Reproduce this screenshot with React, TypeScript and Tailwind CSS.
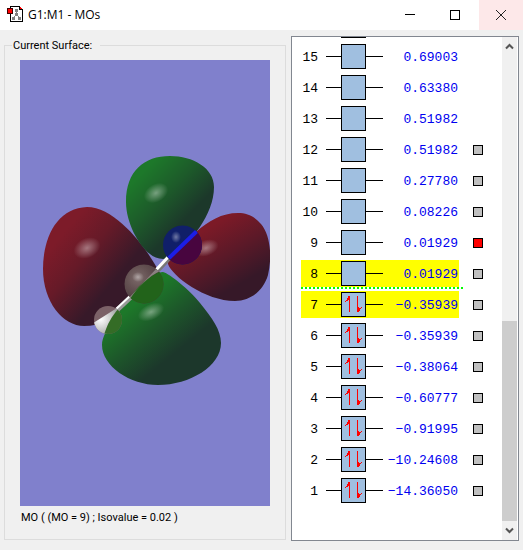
import React from 'react';

type Orbital = {
    index: number;
    energy: string;
    occupied?: boolean;
    marked?: boolean;
    surface?: 'none' | 'ready' | 'shown';
};

const orbitals: Orbital[] = [
    { index: 15, energy: '0.69003', surface: 'none' },
    { index: 14, energy: '0.63380', surface: 'none' },
    { index: 13, energy: '0.51982', surface: 'none' },
    { index: 12, energy: '0.51982' },
    { index: 11, energy: '0.27780' },
    { index: 10, energy: '0.08226' },
    { index: 9, energy: '0.01929', surface: 'shown' },
    { index: 8, energy: '0.01929', marked: true },
    { index: 7, energy: '−0.35939', occupied: true, marked: true },
    { index: 6, energy: '−0.35939', occupied: true },
    { index: 5, energy: '−0.38064', occupied: true },
    { index: 4, energy: '−0.60777', occupied: true },
    { index: 3, energy: '−0.91995', occupied: true },
    { index: 2, energy: '−10.24608', occupied: true },
    { index: 1, energy: '−14.36050', occupied: true },
];

const AppIcon = () => (
    <svg width="17" height="18" viewBox="0 0 17 18" shapeRendering="crispEdges" aria-hidden="true">
        <path d="M3.5 .5h9l3 3v12h-12z" fill="#fff" stroke="#000" />
        <path d="M12 0h1v1h1v1h1v1h1v1h-4z" fill="#000" />
        <path d="M13 1h1v1h1v1h-2z" fill="#f00" />
        <path d="M8 3h3v3H8zM8 7h3v3H8zM5 11h3v3H5zM11 11h3v3h-3z" fill="#808080" />
        <path d="M9 6h1v1H9zM7 10h1v1H7zM11 10h1v1h-1z" fill="#808080" />
        <path d="M.5 2.5h5v5h-5z" fill="#f00" stroke="#400000" />
    </svg>
);

const TitleBar = () => (
    <header className="flex h-[30px] shrink-0 items-center bg-white pl-[7px]">
        <AppIcon />
        <h1 className="ml-1 flex-1 font-['Open_Sans',sans-serif] text-[12px] leading-4 text-black">G1:M1 - MOs</h1>
        <button type="button" aria-label="Minimize" className="flex h-full w-[45px] items-center justify-center">
            <svg width="10" height="10" shapeRendering="crispEdges">
                <path d="M0 4.5h10" stroke="#000" />
            </svg>
        </button>
        <button type="button" aria-label="Maximize" className="flex h-full w-[45px] items-center justify-center">
            <svg width="10" height="10" shapeRendering="crispEdges">
                <path d="M.5.5h9v9h-9z" fill="none" stroke="#000" />
            </svg>
        </button>
        <button type="button" aria-label="Close" className="ml-[2px] flex h-full w-[44px] items-center justify-center bg-[#fde8e9]">
            <svg width="10" height="10">
                <path d="M0 0l10 10M10 0L0 10" stroke="#222" />
            </svg>
        </button>
    </header>
);

const SurfaceView = () => (
    <svg
        viewBox="20 60 250 446"
        preserveAspectRatio="xMidYMid slice"
        role="img"
        aria-label="Molecular orbital 9"
        className="block min-h-0 w-full flex-1 bg-[#8080cc]"
    >
        <defs>
            <linearGradient id="redLeft" gradientUnits="userSpaceOnUse" x1="62" y1="235" x2="115" y2="280">
                <stop offset="0" stopColor="#7d1b29" />
                <stop offset="0.45" stopColor="#661a28" />
                <stop offset="1" stopColor="#371929" />
            </linearGradient>
            <linearGradient id="redRight" gradientUnits="userSpaceOnUse" x1="208" y1="228" x2="240" y2="284">
                <stop offset="0" stopColor="#7c1a27" />
                <stop offset="0.5" stopColor="#5b1928" />
                <stop offset="1" stopColor="#361828" />
            </linearGradient>
            <linearGradient id="greenTop" gradientUnits="userSpaceOnUse" x1="145" y1="170" x2="190" y2="214">
                <stop offset="0" stopColor="#1d782a" />
                <stop offset="0.5" stopColor="#1d5b2a" />
                <stop offset="1" stopColor="#1c382a" />
            </linearGradient>
            <linearGradient id="greenBottom" gradientUnits="userSpaceOnUse" x1="134" y1="305" x2="174" y2="354">
                <stop offset="0" stopColor="#1d7829" />
                <stop offset="0.5" stopColor="#1d562a" />
                <stop offset="1" stopColor="#1c372b" />
            </linearGradient>
            <radialGradient id="shine">
                <stop offset="0" stopColor="#fff" stopOpacity="0.4" />
                <stop offset="0.4" stopColor="#fff" stopOpacity="0.24" />
                <stop offset="1" stopColor="#fff" stopOpacity="0" />
            </radialGradient>
            <radialGradient id="carbon" cx="0.35" cy="0.35" r="0.7">
                <stop offset="0" stopColor="#7d6b6b" />
                <stop offset="0.4" stopColor="#655253" />
                <stop offset="1" stopColor="#463538" />
            </radialGradient>
            <radialGradient id="hydrogen" cx="0.3" cy="0.4" r="0.7">
                <stop offset="0" stopColor="#fff" />
                <stop offset="1" stopColor="#999" />
            </radialGradient>
            <clipPath id="carbonBall">
                <circle cx="144" cy="284" r="19.5" />
            </clipPath>
            <clipPath id="nitrogenBall">
                <circle cx="182.5" cy="245" r="19.5" />
            </clipPath>
            <clipPath id="hydrogenBall">
                <circle cx="108" cy="320" r="14" />
            </clipPath>
        </defs>

        <path d="M87 207C58 208 43 236 43 269C43 302 63 326 84 326C116 326 150 297 158 270C150 254 118 207 87 207Z" fill="url(#redLeft)" />
        <path d="M170 156C144 156 126 171 126 202C126 222 138 245 150 254C155 259 166 261 172 256C190 243 214 215 214 187C214 168 193 156 170 156Z" fill="url(#greenTop)" />
        <path d="M238 213C222 213 208 221 196 232C182 242 168 254 168 264C172 276 205 301 235 301C252 301 264 289 268 275C272 258 271 236 261 224C254 216 247 213 238 213Z" fill="url(#redRight)" />
        <path d="M163 272C170 274 190 290 200 303C212 318 221 330 221 343C221 366 190 385 158 385C130 385 102 366 102 345C102 330 125 303 140 289C150 279 157 272 163 272Z" fill="url(#greenBottom)" />

        <ellipse cx="87" cy="248" rx="14" ry="10" fill="url(#shine)" transform="rotate(-25 87 248)" />
        <ellipse cx="156" cy="193" rx="13" ry="9" fill="url(#shine)" transform="rotate(-30 156 193)" />
        <ellipse cx="206" cy="248" rx="13" ry="8" fill="url(#shine)" transform="rotate(-20 206 248)" />
        <ellipse cx="151" cy="312" rx="14" ry="8" fill="url(#shine)" transform="rotate(-25 151 312)" />

        {/* Bonds */}
        <path d="M116 311L132 296" stroke="#999" strokeWidth="5" />
        <path d="M115 310L131 295" stroke="#fff" strokeWidth="2" />
        <path d="M156 272L171 256" stroke="#777" strokeWidth="5" />
        <path d="M155 271L170 255" stroke="#fff" strokeWidth="3" />

        {/* Carbon */}
        <g clipPath="url(#carbonBall)">
            <circle cx="144" cy="284" r="20" fill="url(#carbon)" />
            <path d="M127 302C136 288 149 274 163 271L170 290L145 310Z" fill="#22631a" />
            <path d="M127 300L156 269L160 271C149 276 138 287 130 299Z" fill="#8b8180" />
            <ellipse cx="138" cy="277" rx="6" ry="5" fill="url(#shine)" />
        </g>

        {/* Nitrogen */}
        <g clipPath="url(#nitrogenBall)">
            <circle cx="182.5" cy="245" r="20" fill="#101f69" />
            <path d="M166 262L199 230L210 245L190 270Z" fill="#48053f" />
            <path d="M169 258L197 231" stroke="#1c1ee6" strokeWidth="4" />
            <ellipse cx="176" cy="237" rx="5" ry="6" fill="url(#shine)" />
        </g>

        {/* Hydrogen */}
        <g clipPath="url(#hydrogenBall)">
            <circle cx="108" cy="320" r="15" fill="#7b6167" />
            <path d="M93 323L117 308L121 310L108 336L92 334Z" fill="url(#hydrogen)" />
            <path d="M119 308L124 309L124 335L104 335C107 325 111 317 119 308Z" fill="#346c26" />
        </g>
    </svg>
);

const SurfacePanel = () => (
    <fieldset className="mt-[9px] mb-[10px] flex min-w-0 flex-1 flex-col border border-[#dcdcdc] px-[15px] pb-[13px] font-['Roboto',sans-serif] text-[11px]">
        <legend className="-ml-2 w-[88px] pl-px leading-[13px]">Current Surface:</legend>
        <div className="flex h-full flex-col pt-2">
            <SurfaceView />
            <p className="mt-1 pl-px leading-4">MO ( (MO = 9) ; Isovalue = 0.02 )</p>
        </div>
    </fieldset>
);

const Electrons = () => (
    <svg width="23" height="23" viewBox="0 0 23 23" shapeRendering="crispEdges" aria-hidden="true">
        <path d="M7 3h1v16H7zM15 3h1v16h-1z" fill="#f00" />
        <path d="M7 3v4H6v1H4v1H3V8h1V7h1V5h1V3zM16 19v-5h1v1h2v-1h1v1h-1v1h-1v2h-1v1z" fill="#f00" />
    </svg>
);

const OrbitalRow = ({ orbital }: { orbital: Orbital }) => {
    const { index, energy, occupied, marked, surface = 'ready' } = orbital;

    return (
        <li className="flex h-[31px] items-center">
            <div className={`flex h-[27px] w-[158px] items-center ${marked ? 'bg-[#ff0]' : ''}`}>
                <span className="w-[17px] pt-[2px] text-right text-black">{index}</span>
                <span className="ml-2 h-px w-[15px] bg-black" />
                <button
                    type="button"
                    aria-label={`Orbital ${index}`}
                    className="size-[25px] shrink-0 border border-black bg-[#a0bfe0]"
                >
                    {occupied && <Electrons />}
                </button>
                <span className="h-px w-[17px] shrink-0 bg-black" />
                <span className="w-[75px] pt-[2px] text-right text-[#0000f0]">{energy}</span>
            </div>
            {surface !== 'none' && (
                <button
                    type="button"
                    aria-label={`Show surface ${index}`}
                    className={`ml-[14px] size-[10px] border border-black ${surface === 'shown' ? 'bg-[#f00]' : 'bg-[#c0c0c0]'}`}
                />
            )}
        </li>
    );
};

const ScrollBar = () => (
    <div className="flex w-[15px] shrink-0 flex-col bg-[#f0f0f0]">
        <button type="button" aria-label="Scroll up" className="flex h-[18px] items-center justify-center">
            <svg width="9" height="7">
                <path d="M1 5.5l3.5-3.5L8 5.5" fill="none" stroke="#555" strokeWidth="2" />
            </svg>
        </button>
        <div className="flex-[266]" />
        <div className="flex-[200] bg-[#cdcdcd]" />
        <button type="button" aria-label="Scroll down" className="flex h-[19px] items-center justify-center">
            <svg width="9" height="7">
                <path d="M1 1.5L4.5 5L8 1.5" fill="none" stroke="#555" strokeWidth="2" />
            </svg>
        </button>
    </div>
);

const OrbitalPanel = () => (
    <section className="mt-[6px] mb-[9px] flex w-[228px] shrink-0 border border-[#828790] bg-white pr-px">
        <div className="min-w-0 flex-1 overflow-hidden pl-[9px] font-['Liberation_Mono',monospace] text-[13px] leading-4">
            {/* lower edge of orbital 16, scrolled out of view */}
            <div className="mb-[3px] ml-10 h-px w-[25px] bg-black" />
            <ul>
                {orbitals.map((orbital) => (
                    <React.Fragment key={orbital.index}>
                        {/* HOMO / LUMO gap */}
                        {orbital.index === 7 && (
                            <li
                                aria-hidden="true"
                                className="-mt-[2px] h-[2px] w-[162px] bg-[repeating-linear-gradient(90deg,#0f0_0_2px,transparent_2px_4px)]"
                            />
                        )}
                        <OrbitalRow orbital={orbital} />
                    </React.Fragment>
                ))}
            </ul>
        </div>
        <ScrollBar />
    </section>
);

const App = () => (
    <div className="flex h-screen min-h-[550px] flex-col bg-[#f0f0f0] font-['Liberation_Sans',sans-serif] text-black">
        <TitleBar />
        <main className="flex min-h-0 flex-1 gap-[5px] px-1">
            <SurfacePanel />
            <OrbitalPanel />
        </main>
    </div>
);

export default App;
